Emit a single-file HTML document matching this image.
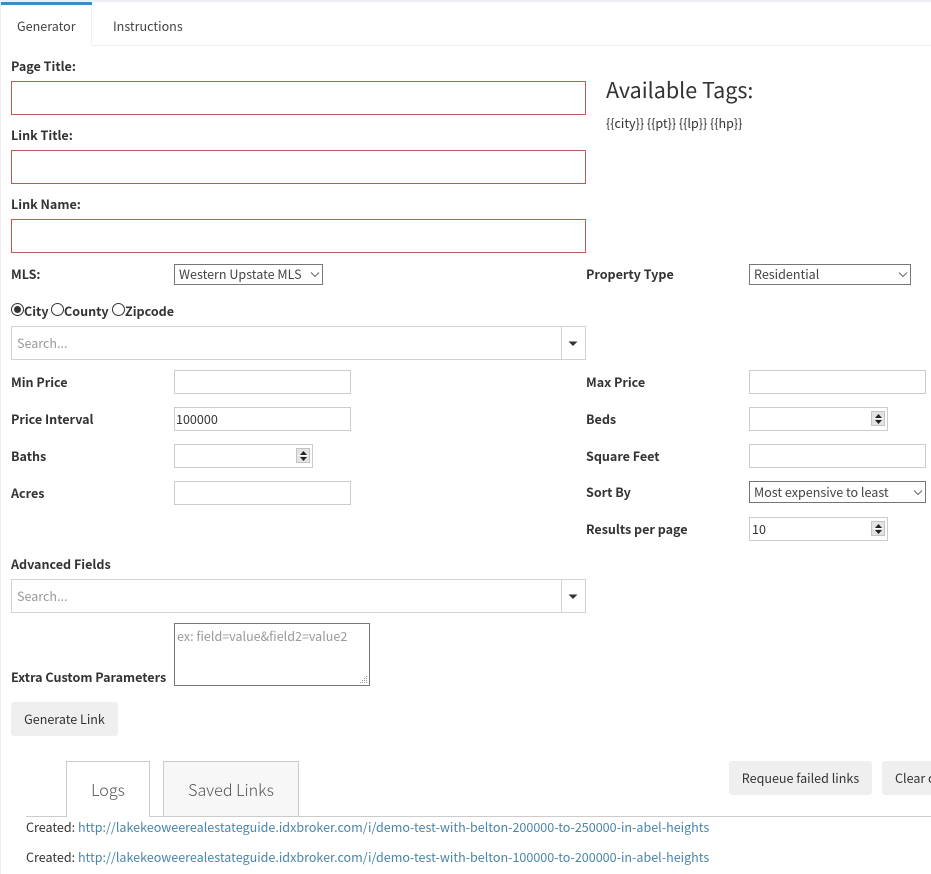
<!DOCTYPE html>
<html><head><meta charset="utf-8"><title>Generator</title>
<style>
*{box-sizing:border-box}
html,body{margin:0;padding:0;background:#fff}
body{width:931px;height:874px;position:relative;overflow:hidden;font-family:"Noto Sans CJK JP","Liberation Sans",sans-serif;font-size:12.55px;color:#333}
.a{position:absolute}
.t{position:absolute;white-space:nowrap;line-height:18px;height:18px}
.b{font-weight:700;color:#333}
.red{position:absolute;left:11px;width:575px;height:34px;border:1px solid #b85c52;background:#fff}
.in{position:absolute;height:24px;border:1px solid #ccc;background:#fff;line-height:22px;padding-left:1px;color:#333}
.sel{position:absolute;height:21px;border:1px solid #767676;background:#fff;line-height:17px;padding-left:4px;color:#444;white-space:nowrap}
.sel svg{position:absolute;top:6px}
.srch{position:absolute;left:11px;width:575px;height:34px;border:1px solid #d2d2d2;background:#fff}
.srch span{position:absolute;left:5px;top:7px;line-height:18px;color:#999}
.srch i{position:absolute;left:549px;top:0;width:1px;height:32px;background:#d2d2d2}
.srch svg{position:absolute;left:556px;top:14px}
.spin{position:absolute;top:3px;width:14px;height:15px;background:#e3e3e3;border:1px solid #c4c4c4}
.spin:after{content:"";position:absolute;left:1px;right:1px;top:6px;height:1px;background:#fff}
.spin svg{position:absolute;left:2.5px}
.btn{position:absolute;background:#efefef;border-radius:3px;text-align:center;color:#333;white-space:nowrap}
a{color:#4a85ab;text-decoration:none}
.r{position:absolute;top:303px;width:13px;height:13px;border:1px solid #333;border-radius:50%;background:#fff}
</style></head>
<body>
<div class="a" style="left:0;top:0;width:931px;height:2px;background:#ecf0f5"></div>
<div class="a" style="left:0;top:0;width:1px;height:874px;background:#ecf0f5"></div>
<div class="a" style="left:92px;top:45px;width:839px;height:1px;background:#f0f0f0"></div>
<div class="a" style="left:91px;top:5px;width:1px;height:41px;background:#f0f0f0"></div>
<div class="a" style="left:1px;top:2px;width:91px;height:3px;background:#3c8dbc"></div>
<div class="t" style="left:17px;top:17px;color:#444">Generator</div>
<div class="t" style="left:113px;top:17px;color:#444">Instructions</div>

<div class="t b" style="left:11px;top:57px">Page Title:</div>
<div class="red" style="top:81px"></div>
<div class="t b" style="left:11px;top:126px">Link Title:</div>
<div class="red" style="top:150px"></div>
<div class="t b" style="left:11px;top:195px">Link Name:</div>
<div class="red" style="top:219px"></div>

<div class="t" style="left:606px;top:74px;font-size:21.5px;line-height:32px;height:32px;color:#333">Available Tags:</div>
<div class="t" style="left:606px;top:114px">{{city}} {{pt}} {{lp}} {{hp}}</div>

<div class="t b" style="left:11px;top:265px">MLS:</div>
<div class="sel" style="left:174px;top:264px;width:149px">Western Upstate MLS<svg style="left:135px" width="10" height="8" viewBox="0 0 10 8"><path d="M1 1.5L5 5.5L9 1.5" fill="none" stroke="#666" stroke-width="1"/></svg></div>
<div class="t b" style="left:586px;top:265px">Property Type</div>
<div class="sel" style="left:749px;top:264px;width:162px">Residential<svg style="left:148px" width="10" height="8" viewBox="0 0 10 8"><path d="M1 1.5L5 5.5L9 1.5" fill="none" stroke="#666" stroke-width="1"/></svg></div>

<div class="r" style="left:11px"></div><div class="a" style="left:14px;top:306px;width:7px;height:7px;border-radius:50%;background:#333"></div>
<div class="t b" style="left:24px;top:302px">City</div>
<div class="r" style="left:51px"></div>
<div class="t b" style="left:64px;top:302px">County</div>
<div class="r" style="left:112px"></div>
<div class="t b" style="left:125px;top:302px">Zipcode</div>

<div class="srch" style="top:326px"><span>Search...</span><i></i><svg width="10" height="6" viewBox="0 0 10 6"><path d="M0.5 0.5H9.5L5 5Z" fill="#333"/></svg></div>

<div class="t b" style="left:11px;top:373px">Min Price</div>
<div class="in" style="left:174px;top:370px;width:177px"></div>
<div class="t b" style="left:586px;top:373px">Max Price</div>
<div class="in" style="left:749px;top:370px;width:177px"></div>

<div class="t b" style="left:11px;top:410px">Price Interval</div>
<div class="in" style="left:174px;top:407px;width:177px">100000</div>
<div class="t b" style="left:586px;top:410px">Beds</div>
<div class="in" style="left:749px;top:407px;width:139px"><div class="spin" style="left:121px"><svg style="top:1.5px" width="7" height="4" viewBox="0 0 7 4"><path d="M3.5 0L7 4H0Z" fill="#222"/></svg><svg style="top:8px" width="7" height="4" viewBox="0 0 7 4"><path d="M0 0H7L3.5 4Z" fill="#222"/></svg></div></div>

<div class="t b" style="left:11px;top:447px">Baths</div>
<div class="in" style="left:174px;top:444px;width:139px"><div class="spin" style="left:121px"><svg style="top:1.5px" width="7" height="4" viewBox="0 0 7 4"><path d="M3.5 0L7 4H0Z" fill="#222"/></svg><svg style="top:8px" width="7" height="4" viewBox="0 0 7 4"><path d="M0 0H7L3.5 4Z" fill="#222"/></svg></div></div>
<div class="t b" style="left:586px;top:447px">Square Feet</div>
<div class="in" style="left:749px;top:444px;width:177px"></div>

<div class="t b" style="left:11px;top:484px">Acres</div>
<div class="in" style="left:174px;top:481px;width:177px"></div>
<div class="t b" style="left:586px;top:483px">Sort By</div>
<div class="sel" style="left:749px;top:481px;width:177px;height:22px;line-height:19px">Most expensive to least<svg style="left:163px;top:7px" width="10" height="8" viewBox="0 0 10 8"><path d="M1 1.5L5 5.5L9 1.5" fill="none" stroke="#666" stroke-width="1"/></svg></div>

<div class="t b" style="left:586px;top:520px">Results per page</div>
<div class="in" style="left:749px;top:517px;width:139px;padding-left:2px">10<div class="spin" style="left:121px"><svg style="top:1.5px" width="7" height="4" viewBox="0 0 7 4"><path d="M3.5 0L7 4H0Z" fill="#222"/></svg><svg style="top:8px" width="7" height="4" viewBox="0 0 7 4"><path d="M0 0H7L3.5 4Z" fill="#222"/></svg></div></div>

<div class="t b" style="left:11px;top:555px">Advanced Fields</div>
<div class="srch" style="top:579px"><span>Search...</span><i></i><svg width="10" height="6" viewBox="0 0 10 6"><path d="M0.5 0.5H9.5L5 5Z" fill="#333"/></svg></div>

<div class="t b" style="left:11px;top:668px">Extra Custom Parameters</div>
<div class="a" style="left:174px;top:623px;width:196px;height:63px;border:1px solid #767676;background:#fff">
<div class="t" style="left:2px;top:3px;color:#999">ex: field=value&amp;field2=value2</div>
<svg class="a" style="left:184px;top:51px" width="9" height="9" viewBox="0 0 9 9"><g fill="#999"><rect x="7" y="1" width="1" height="1"/><rect x="5" y="3" width="1" height="1"/><rect x="7" y="3" width="1" height="1"/><rect x="3" y="5" width="1" height="1"/><rect x="5" y="5" width="1" height="1"/><rect x="7" y="5" width="1" height="1"/><rect x="1" y="7" width="1" height="1"/><rect x="3" y="7" width="1" height="1"/><rect x="5" y="7" width="1" height="1"/><rect x="7" y="7" width="1" height="1"/></g></svg>
</div>

<div class="btn" style="left:11px;top:702px;width:107px;height:34px;line-height:33px">Generate Link</div>

<div class="a" style="left:26px;top:816px;width:905px;height:1px;background:#ccc"></div>
<div class="a" style="left:66px;top:761px;width:84px;height:56px;border:1px solid #ccc;border-bottom:0;background:#fff;text-align:center;font-size:16.1px;font-weight:300;line-height:55px;color:#555">Logs</div>
<div class="a" style="left:163px;top:761px;width:136px;height:55px;border:1px solid #ccc;border-bottom:0;background:#f7f7f7;text-align:center;font-size:16.1px;font-weight:300;line-height:55px;color:#555">Saved Links</div>

<div class="btn" style="left:729px;top:761px;width:143px;height:34px;line-height:33px">Requeue failed links</div>
<div class="a" style="left:882px;top:761px;width:49px;height:34px;overflow:hidden;background:#efefef;border-radius:3px 0 0 3px;line-height:33px;padding-left:13px;white-space:nowrap;color:#333">Clear c</div>

<div class="t" style="left:26px;top:818px">Created: <a href="#">http://lakekeoweerealestateguide.idxbroker.com/i/demo-test-with-belton-200000-to-250000-in-abel-heights</a></div>
<div class="t" style="left:26px;top:848px">Created: <a href="#">http://lakekeoweerealestateguide.idxbroker.com/i/demo-test-with-belton-100000-to-200000-in-abel-heights</a></div>
</body></html>
